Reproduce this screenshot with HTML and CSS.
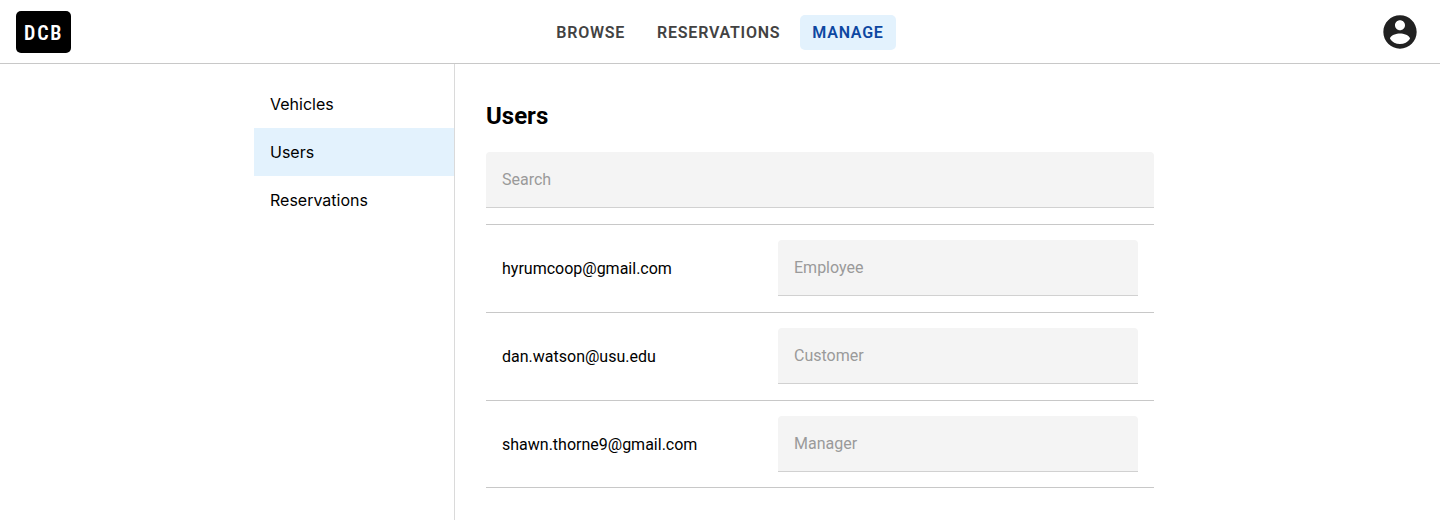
FILE: index.html
```html
<!DOCTYPE html>
<html lang="en">
<head>
<meta charset="utf-8">
<title>Users</title>
<link rel="stylesheet" href="styles.css">
</head>
<body>
<header class="topbar">
  <a class="logo">DCB</a>
  <nav class="nav">
    <a class="nav-link">BROWSE</a>
    <a class="nav-link">RESERVATIONS</a>
    <a class="nav-link active">MANAGE</a>
  </nav>
  <div class="account">
    <svg width="40" height="40" viewBox="0 0 24 24"><path fill="#212121" d="M12 2C6.480 2 2 6.480 2 12s4.480 10 10 10 10-4.480 10-10S17.520 2 12 2zm0 3c1.660 0 3 1.340 3 3s-1.340 3-3 3-3-1.340-3-3 1.340-3 3-3zm0 14.200c-2.500 0-4.710-1.280-6-3.220.03-1.990 4-3.080 6-3.080 1.990 0 5.970 1.090 6 3.080-1.290 1.940-3.500 3.220-6 3.220z"/></svg>
  </div>
</header>
<div class="page">
  <aside class="sidebar">
    <a class="side-link">Vehicles</a>
    <a class="side-link active">Users</a>
    <a class="side-link">Reservations</a>
  </aside>
  <main class="content">
    <h1 class="title">Users</h1>
    <div class="field">Search</div>
    <div class="list">
      <div class="row"><span class="email">hyrumcoop@gmail.com</span><div class="field role">Employee</div></div>
      <div class="row"><span class="email">dan.watson@usu.edu</span><div class="field role">Customer</div></div>
      <div class="row"><span class="email">shawn.thorne9@gmail.com</span><div class="field role">Manager</div></div>
    </div>
  </main>
</div>
</body>
</html>
```

FILE: styles.css
```css
* { box-sizing: border-box; }
body { margin: 0; height: 520px; overflow: hidden; display: flex; flex-direction: column; background: #fff; color: #000; font: 16px/24px Roboto, sans-serif; }
.topbar { height: 64px; flex: none; display: grid; grid-template-columns: 1fr auto 1fr; align-items: center; padding: 0 16px; border-bottom: 1px solid #c8c8c8; }
.logo { width: 55px; height: 42px; border-radius: 5px; background: #000; color: #fff; font-size: 20px; font-weight: 600; font-stretch: 83%; line-height: 44px; letter-spacing: 1.8px; padding-left: 8px; }
.nav { display: flex; gap: 8px; margin-top: 1px; }
.nav-link { height: 35px; padding: 0 12px; border-radius: 5px; line-height: 36px; font-weight: 600; letter-spacing: 0.76px; color: #424242; }
.nav-link.active { background: #e3f2fd; color: #0d47a1; }
.account { justify-self: end; height: 40px; margin-right: 4px; }
.page { flex: 1; display: flex; }
.sidebar { width: 455px; padding: 16px 0 0 254px; border-right: 1px solid #dadada; }
.side-link { display: block; height: 48px; padding-left: 16px; line-height: 48px; font-family: Inter, sans-serif; }
.side-link.active { background: #e3f2fd; }
.content { width: 699px; padding: 36px 0 0 31px; }
.title { margin: 0 0 20px; font-size: 24px; line-height: 32px; font-weight: 700; }
.field { height: 56px; padding: 0 16px; border-radius: 4px 4px 0 0; border-bottom: 1px solid #d1d1d1; background: #f4f4f4; color: #9a9a9a; line-height: 55px; }
.list { margin-top: 16px; border-top: 1px solid #c8c8c8; }
.row { height: 88px; display: flex; align-items: flex-start; justify-content: space-between; padding: 15px 16px 0; border-bottom: 1px solid #c8c8c8; }
.row:last-child { height: 87px; }
.email { line-height: 57px; }
.role { width: 360px; }
```
